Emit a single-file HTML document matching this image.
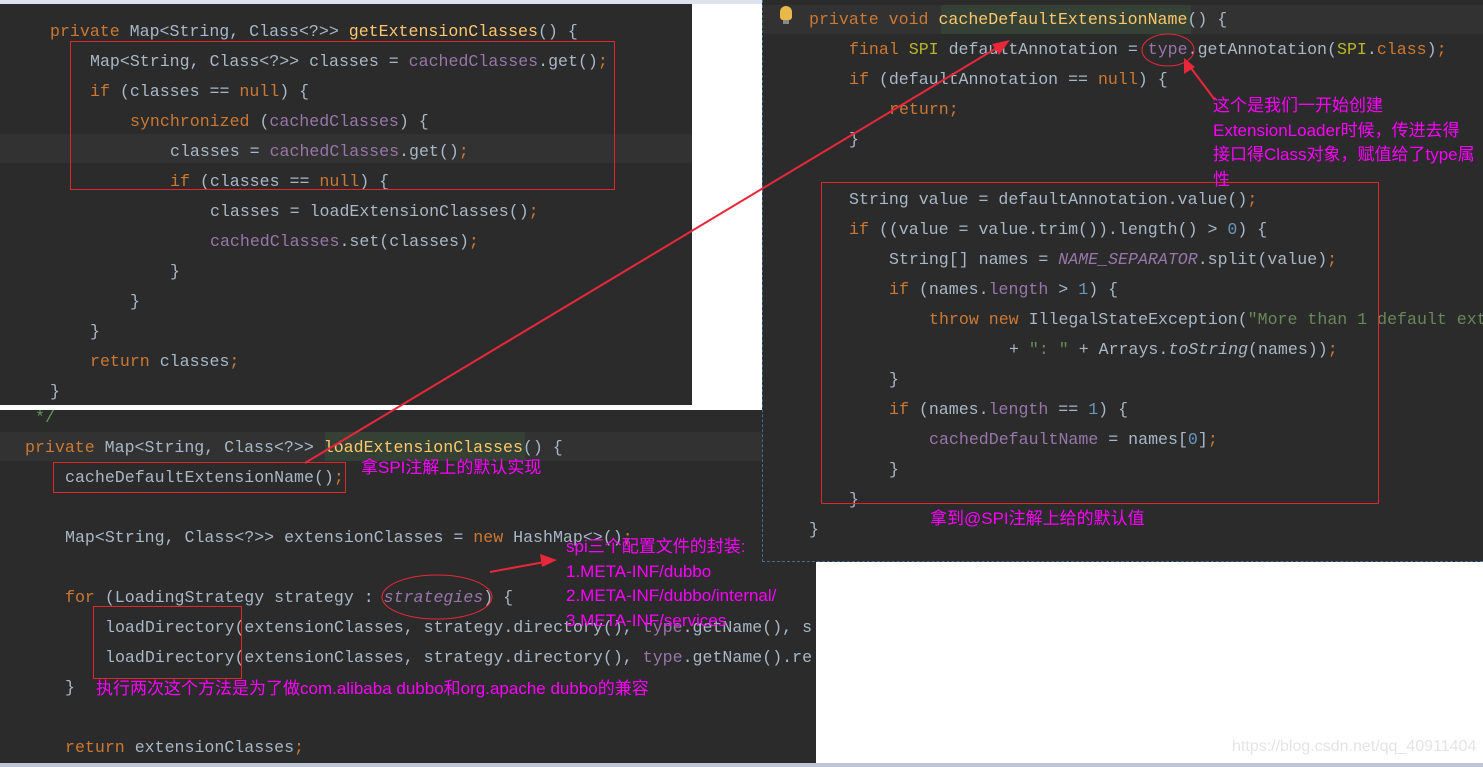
<!DOCTYPE html>
<html><head><meta charset="utf-8"><style>
body{margin:0;width:1483px;height:767px;background:#fff;position:relative;overflow:hidden;font-family:"Liberation Mono",monospace;}
.p{position:absolute;background:#2b2b2b;overflow:hidden}
.l{position:absolute;white-space:pre;font-size:16.6px;color:#a9b7c6;line-height:20px;height:20px}
.k{color:#cc7832}.f{color:#9876aa}.m{color:#ffc66d}.n{color:#6897bb}.s{color:#6a8759}.i{font-style:italic}
.a{position:absolute;white-space:pre;color:#f0f;font-family:"Liberation Sans","Noto Sans CJK SC",sans-serif;font-size:17px;letter-spacing:0;line-height:20px}
.box{position:absolute;border:1px solid #e02828}
</style></head><body>
<div style="position:absolute;left:0;top:0;width:762px;height:4px;background:#dde3ee"></div>
<div style="position:absolute;left:0;top:763px;width:1483px;height:4px;background:#bcc6d6"></div>

<!-- panel 1 -->
<div class="p" style="left:0;top:4px;width:692px;height:401px">
<div style="position:absolute;left:0;top:130px;width:692px;height:29px;background:#323232"></div>
</div>
<div class="l" style="left:50px;top:22px"><span class="k">private</span> Map&lt;String, Class&lt;?&gt;&gt; <span class="m">getExtensionClasses</span>() {</div>
<div class="l" style="left:90px;top:52px">Map&lt;String, Class&lt;?&gt;&gt; classes = <span class="f">cachedClasses</span>.get()<span class="k">;</span></div>
<div class="l" style="left:90px;top:82px"><span class="k">if</span> (classes == <span class="k">null</span>) {</div>
<div class="l" style="left:130px;top:112px"><span class="k">synchronized</span> (<span class="f">cachedClasses</span>) {</div>
<div class="l" style="left:170px;top:142px">classes = <span class="f">cachedClasses</span>.get()<span class="k">;</span></div>
<div class="l" style="left:170px;top:172px"><span class="k">if</span> (classes == <span class="k">null</span>) {</div>
<div class="l" style="left:210px;top:202px">classes = loadExtensionClasses()<span class="k">;</span></div>
<div class="l" style="left:210px;top:232px"><span class="f">cachedClasses</span>.set(classes)<span class="k">;</span></div>
<div class="l" style="left:170px;top:262px">}</div>
<div class="l" style="left:130px;top:292px">}</div>
<div class="l" style="left:90px;top:322px">}</div>
<div class="l" style="left:90px;top:352px"><span class="k">return</span> classes<span class="k">;</span></div>
<div class="l" style="left:50px;top:382px">}</div>
<div class="box" style="left:70px;top:41px;width:543px;height:147px"></div>

<!-- panel 3 -->
<div class="p" style="left:0;top:410px;width:816px;height:353px">
<div style="position:absolute;left:0;top:22px;width:816px;height:29px;background:#323232"></div>
<div style="position:absolute;left:325px;top:22px;width:200px;height:29px;background:#344134"></div>
</div>
<div class="l" style="left:35px;top:408px;color:#629755" >*/</div>
<div class="l" style="left:25px;top:438px"><span class="k">private</span> Map&lt;String, Class&lt;?&gt;&gt; <span class="m">loadExtensionClasses</span>() {</div>
<div class="l" style="left:65px;top:468px">cacheDefaultExtensionName()<span class="k">;</span></div>
<div class="l" style="left:65px;top:528px">Map&lt;String, Class&lt;?&gt;&gt; extensionClasses = <span class="k">new</span> HashMap&lt;&gt;()<span class="k">;</span></div>
<div class="l" style="left:65px;top:588px"><span class="k">for</span> (LoadingStrategy strategy : <span class="f i">strategies</span>) {</div>
<div class="l" style="left:105px;top:618px">loadDirectory(extensionClasses, strategy.directory(), <span class="f">type</span>.getName(), s</div>
<div class="l" style="left:105px;top:648px">loadDirectory(extensionClasses, strategy.directory(), <span class="f">type</span>.getName().re</div>
<div class="l" style="left:65px;top:678px">}</div>
<div class="l" style="left:65px;top:738px"><span class="k">return</span> extensionClasses<span class="k">;</span></div>
<div class="box" style="left:53px;top:462px;width:291px;height:29px"></div>
<div class="box" style="left:93px;top:606px;width:147px;height:71px"></div>

<!-- panel 2 -->
<div class="p" style="left:762px;top:0;width:721px;height:562px;border-left:1px dashed #4a6a8a;border-bottom:1px dashed #4a6a8a;box-sizing:border-box">
<div style="position:absolute;left:0;top:5px;width:721px;height:29px;background:#323232"></div>
<div style="position:absolute;left:178px;top:5px;width:250px;height:29px;background:#344134"></div>
<div style="position:absolute;left:17px;top:6px;width:12px;height:14px;border-radius:6px 6px 3px 3px;background:#e8b84a"></div>
<div style="position:absolute;left:20px;top:20px;width:6px;height:4px;background:#888"></div>
</div>
<div class="l" style="left:809px;top:10px"><span class="k">private void</span> <span class="m">cacheDefaultExtensionName</span>() {</div>
<div class="l" style="left:849px;top:40px"><span class="k">final</span> <span style="color:#bbb529">SPI</span> defaultAnnotation = <span class="f">type</span>.getAnnotation(<span style="color:#bbb529">SPI</span>.<span class="k">class</span>)<span class="k">;</span></div>
<div class="l" style="left:849px;top:70px"><span class="k">if</span> (defaultAnnotation == <span class="k">null</span>) {</div>
<div class="l" style="left:889px;top:100px"><span class="k">return;</span></div>
<div class="l" style="left:849px;top:130px">}</div>
<div class="l" style="left:849px;top:190px">String value = defaultAnnotation.value()<span class="k">;</span></div>
<div class="l" style="left:849px;top:220px"><span class="k">if</span> ((value = value.trim()).length() &gt; <span class="n">0</span>) {</div>
<div class="l" style="left:889px;top:250px">String[] names = <span class="f i">NAME_SEPARATOR</span>.split(value)<span class="k">;</span></div>
<div class="l" style="left:889px;top:280px"><span class="k">if</span> (names.<span class="f">length</span> &gt; <span class="n">1</span>) {</div>
<div class="l" style="left:929px;top:310px"><span class="k">throw new</span> IllegalStateException(<span class="s">"More than 1 default ext</span></div>
<div class="l" style="left:1009px;top:340px">+ <span class="s">": "</span> + Arrays.<span class="i">toString</span>(names))<span class="k">;</span></div>
<div class="l" style="left:889px;top:370px">}</div>
<div class="l" style="left:889px;top:400px"><span class="k">if</span> (names.<span class="f">length</span> == <span class="n">1</span>) {</div>
<div class="l" style="left:929px;top:430px"><span class="f">cachedDefaultName</span> = names[<span class="n">0</span>]<span class="k">;</span></div>
<div class="l" style="left:889px;top:460px">}</div>
<div class="l" style="left:849px;top:490px">}</div>
<div class="l" style="left:809px;top:520px">}</div>
<div class="box" style="left:821px;top:182px;width:556px;height:320px"></div>

<!-- annotations -->
<div class="a" style="left:1213px;top:94px;line-height:24.5px">这个是我们一开始创建<br>ExtensionLoader时候，传进去得<br>接口得Class对象，赋值给了type属<br>性</div>
<div class="a" style="left:930px;top:509px">拿到@SPI注解上给的默认值</div>
<div class="a" style="left:361px;top:458px">拿SPI注解上的默认实现</div>
<div class="a" style="left:566px;top:535px;line-height:24.5px">spi三个配置文件的封装:<br>1.META-INF/dubbo<br>2.META-INF/dubbo/internal/<br>3.META-INF/services</div>
<div class="a" style="left:96px;top:679px">执行两次这个方法是为了做com.alibaba dubbo和org.apache dubbo的兼容</div>
<div style="position:absolute;left:1232px;top:738px;font-family:'Liberation Sans',sans-serif;font-size:16px;color:#e4e4e4">https://blog.csdn.net/qq_40911404</div>

<svg style="position:absolute;left:0;top:0" width="1483" height="767">
<g fill="none" stroke="#e8283a" stroke-width="2">
<line x1="305" y1="463" x2="1000" y2="46"/>
<line x1="1215" y1="100" x2="1188" y2="64"/>
<line x1="490" y1="572" x2="550" y2="561"/>
<ellipse cx="1168" cy="50" rx="26" ry="16" stroke-width="1"/>
<ellipse cx="437" cy="597" rx="55" ry="22" stroke-width="1"/>
</g>
<g fill="#e8283a">
<polygon points="1010,40 992,44 999,55"/>
<polygon points="1184,58 1184,74 1195,67"/>
<polygon points="557,560 540,554 542,567"/>
</g>
</svg>
</body></html>
